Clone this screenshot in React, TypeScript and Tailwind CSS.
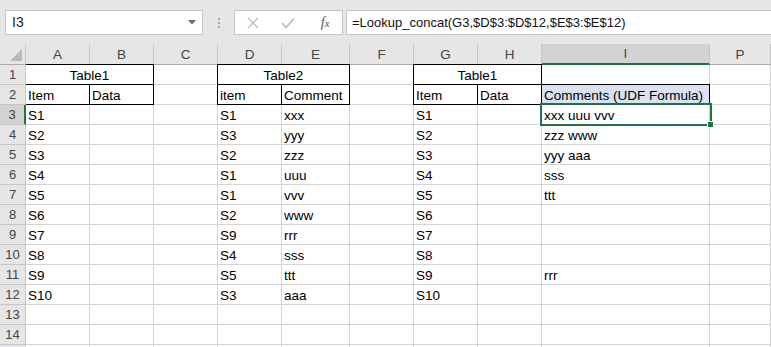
import React from 'react';

type Cell = { t?: string; span?: boolean; center?: boolean; box?: boolean; blue?: boolean; sel?: boolean };

const COLS = ['A', 'B', 'C', 'D', 'E', 'F', 'G', 'H', 'I', 'P'];

const pairs: [string, string][] = [
  ['S1', 'xxx'],
  ['S3', 'yyy'],
  ['S2', 'zzz'],
  ['S1', 'uuu'],
  ['S1', 'vvv'],
  ['S2', 'www'],
  ['S9', 'rrr'],
  ['S4', 'sss'],
  ['S5', 'ttt'],
  ['S3', 'aaa'],
];
const results = ['xxx uuu vvv', 'zzz www', 'yyy aaa', 'sss', 'ttt', '', '', '', 'rrr', ''];

const rows: Cell[][] = [
  [
    { t: 'Table1', span: true, center: true, box: true },
    {},
    { t: 'Table2', span: true, center: true, box: true },
    {},
    { t: 'Table1', span: true, center: true, box: true },
    {},
    {},
  ],
  [
    { t: 'Item', box: true },
    { t: 'Data', box: true },
    {},
    { t: 'item', box: true },
    { t: 'Comment', box: true },
    {},
    { t: 'Item', box: true },
    { t: 'Data', box: true },
    { t: 'Comments (UDF Formula)', box: true, blue: true },
    {},
  ],
  ...pairs.map((p, i) => [
    { t: 'S' + (i + 1) },
    {},
    {},
    { t: p[0] },
    { t: p[1] },
    {},
    { t: 'S' + (i + 1) },
    {},
    { t: results[i], sel: i === 0 },
    {},
  ]),
  Array.from({ length: 10 }, () => ({})),
  Array.from({ length: 10 }, () => ({})),
  Array.from({ length: 10 }, () => ({})),
];

function DataCell({ c }: { c: Cell }) {
  return (
    <div
      className={[
        'relative flex items-end border-r border-b border-[#d4d4d4] px-[2px] leading-[16px] whitespace-nowrap text-black',
        c.span ? 'col-span-2' : '',
        c.center ? 'justify-center' : '',
        c.blue ? 'bg-[#d9e1f2]' : 'bg-white',
      ].join(' ')}
    >
      {c.t}
      {c.box && <div className="pointer-events-none absolute -inset-px z-10 border border-black" />}
      {c.sel && (
        <div className="pointer-events-none absolute -left-[2px] -top-[2px] -right-[3px] -bottom-[2px] z-30 border-2 border-[#217346]">
          <div className="absolute -right-[4px] -bottom-[4px] h-[7px] w-[7px] border border-white bg-[#217346]" />
        </div>
      )}
    </div>
  );
}

export default function App() {
  return (
    <div className="h-[347px] w-[771px] overflow-hidden bg-white font-['Liberation_Sans',Arial,sans-serif] text-[13.5px]">
      {/* Formula bar */}
      <div className="flex h-[44px] items-start bg-[#e6e6e6] pt-[10px]">
        <div className="ml-[5px] flex h-[25px] w-[198px] items-center justify-between border border-[#c6c6c6] bg-white pl-[6px] pr-[6px] text-[14px] text-[#222]">
          <span>I3</span>
          <svg width="8" height="5" viewBox="0 0 8 5">
            <path d="M0 0 L8 0 L4 4.5 Z" fill="#6b6b6b" />
          </svg>
        </div>
        <div className="flex h-[25px] w-[31px] flex-col items-center justify-center gap-[2px]">
          <div className="h-[2px] w-[2px] bg-[#a8a8a8]" />
          <div className="h-[2px] w-[2px] bg-[#a8a8a8]" />
          <div className="h-[2px] w-[2px] bg-[#a8a8a8]" />
        </div>
        <div className="flex h-[25px] w-[109px] items-center border border-[#c6c6c6] bg-white">
          <div className="flex w-[36px] justify-center">
            <svg width="12" height="12" viewBox="0 0 12 12">
              <path d="M1 1 L11 11 M11 1 L1 11" stroke="#bcbcbc" strokeWidth="1.3" fill="none" />
            </svg>
          </div>
          <div className="flex w-[36px] justify-center">
            <svg width="14" height="12" viewBox="0 0 14 12">
              <path d="M1 6 L5 10.5 L13 1.5" stroke="#bcbcbc" strokeWidth="1.8" fill="none" />
            </svg>
          </div>
          <div className="flex w-[36px] justify-center pl-[2px] font-['Liberation_Serif',serif] text-[14px] italic text-[#555]">
            <span>f</span>
            <span className="mt-[3px] text-[11px]">x</span>
          </div>
        </div>
        <div className="ml-[3px] flex h-[25px] flex-1 items-center border border-r-0 border-[#c6c6c6] bg-white pl-[5px] text-[13px] text-[#111]">
          =Lookup_concat(G3,$D$3:$D$12,$E$3:$E$12)
        </div>
      </div>

      {/* Sheet */}
      <div className="grid grid-cols-[26px_64px_64px_64px_64px_68px_64px_64px_64px_168px_1fr] grid-rows-[21px_repeat(15,20px)]">
        {/* corner */}
        <div className="relative z-20 flex items-end justify-end border-r border-b border-[#c6c6c6] border-b-[#ababab] bg-[#e6e6e6] pb-[3px] pr-[3px]">
          <svg width="12" height="12" viewBox="0 0 12 12">
            <path d="M12 0 L12 12 L0 12 Z" fill="#b8b8b8" />
          </svg>
        </div>
        {COLS.map((c) => (
          <div
            key={c}
            className={[
              'flex items-center justify-center border-r border-b border-[#c6c6c6] text-[#444] leading-[19px]',
              c === 'I' ? 'border-b-2 border-b-[#217346] bg-[#d2d2d2]' : 'border-b-[#ababab] bg-[#e6e6e6]',
            ].join(' ')}
          >
            {c}
          </div>
        ))}
        {rows.map((r, ri) => (
          <React.Fragment key={ri}>
            <div
              className={[
                'relative z-20 flex items-center justify-center border-b border-[#c6c6c6] text-[13px] leading-[19px] text-[#444]',
                ri === 2 ? 'border-r-2 border-r-[#217346] bg-[#d2d2d2]' : 'border-r bg-[#e6e6e6]',
              ].join(' ')}
            >
              {ri < 14 ? ri + 1 : ''}
            </div>
            {r.map((c, ci) => (
              <DataCell key={ci} c={c} />
            ))}
          </React.Fragment>
        ))}
      </div>
    </div>
  );
}
